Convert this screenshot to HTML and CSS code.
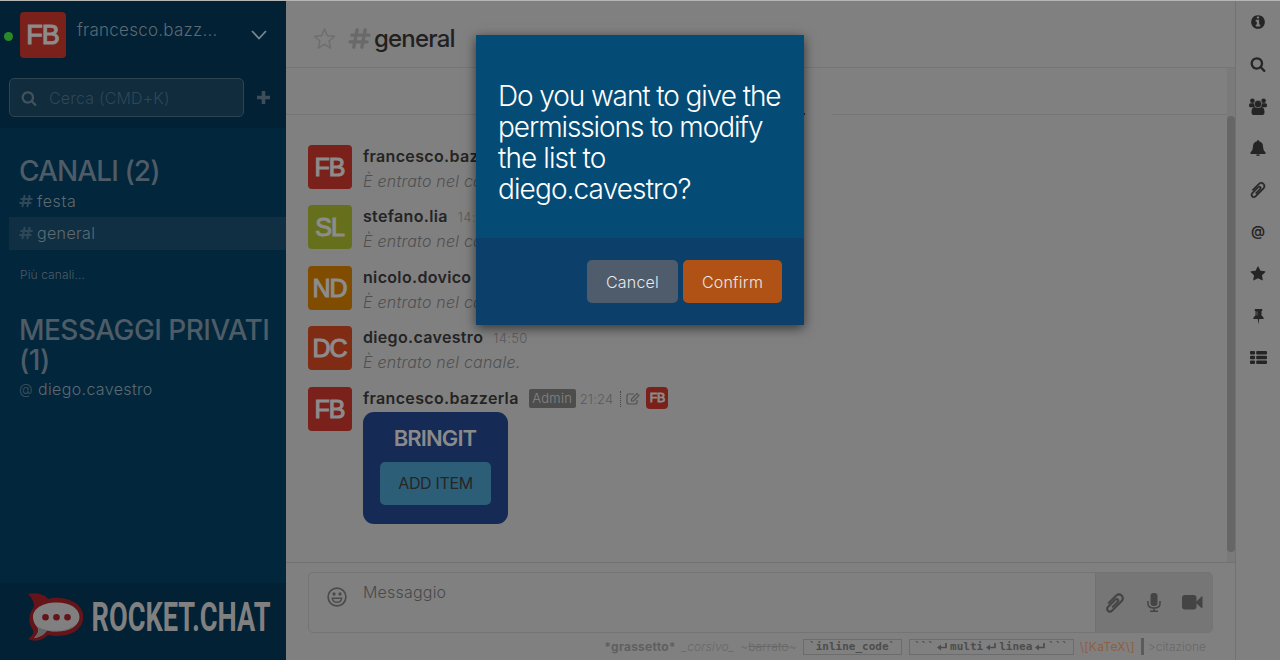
FILE: index.html
```html
<!DOCTYPE html>
<html lang="it">
<head>
<meta charset="utf-8">
<title>general</title>
<link rel="stylesheet" href="styles.css">
</head>
<body>
<svg class="defs" width="0" height="0" aria-hidden="true">
  <symbol id="search" viewBox="0 0 1792 1792"><path d="M1216 832q0-185-131.500-316.500t-316.500-131.500-316.500 131.500-131.500 316.500 131.500 316.500 316.500 131.500 316.500-131.500 131.500-316.500zm512 832q0 52-38 90t-90 38q-54 0-90-38l-343-342q-179 124-399 124-143 0-273.500-55.500t-225-150-150-225-55.500-273.500 55.500-273.500 150-225 225-150 273.500-55.500 273.500 55.500 225 150 150 225 55.500 273.500q0 220-124 399l343 343q37 37 37 90z"/></symbol>
  <symbol id="clip" viewBox="0 0 1792 1792"><path transform="translate(1792 0) scale(-1 1)" stroke="currentColor" stroke-width="50" d="M1596 1385q0 117-79 196t-196 79q-135 0-235-100l-777-776q-113-115-113-271 0-159 110-270t269-111q158 0 273 113l605 606q10 10 10 22 0 16-30.500 46.500t-46.500 30.500q-13 0-23-10l-606-607q-79-77-181-77-106 0-179 75t-73 181q0 105 76 181l776 777q63 63 145 63 64 0 106-42t42-106q0-82-63-145l-581-581q-26-24-60-24-29 0-48 19t-19 48q0 32 25 59l410 410q10 10 10 22 0 16-31 47t-47 31q-12 0-22-10l-410-410q-63-61-63-149 0-82 57-139t139-57q88 0 149 63l581 581q100 98 100 235z"/></symbol>
  <symbol id="hash" viewBox="0 0 24 22"><path d="M9.500 2 6 20M18 2l-3.500 18M4 7.500h18M2 14.500h18" fill="none" stroke="currentColor" stroke-width="3.500" stroke-linecap="round"/></symbol>
  <symbol id="ret" viewBox="0 0 10 8"><path d="M9 0v4.500H2" fill="none" stroke="currentColor" stroke-width="1.700"/><path d="M0 4.500L4 1.500v6z" fill="currentColor"/></symbol>
</svg>
<div class="topline"></div>
<div class="app">
  <aside class="side">
    <header class="side-head">
      <div class="me">
        <i class="dot"></i>
        <div class="avatar big red">FB</div>
        <span class="me-name">francesco.bazz...</span>
        <svg class="chev" width="16" height="10" viewBox="0 0 16 10"><path d="M1 1l7 7.500L15 1" fill="none" stroke="currentColor" stroke-width="1.800"/></svg>
      </div>
      <div class="find">
        <div class="find-box"><svg class="ic" width="16" height="16"><use href="#search"/></svg><span>Cerca (CMD+K)</span></div>
        <svg class="plus" width="13" height="13" viewBox="0 0 13 13"><path d="M6.500 0v13M0 6.500h13" stroke="currentColor" stroke-width="3.600"/></svg>
      </div>
    </header>
    <nav class="rooms">
      <h3 class="ch">CANALI (2)</h3>
      <div class="room"><svg class="hash" width="14" height="14"><use href="#hash"/></svg><span class="r1">festa</span></div>
      <div class="room active"><svg class="hash" width="14" height="14"><use href="#hash"/></svg><span>general</span></div>
      <div class="more">Più canali...</div>
      <h3 class="pm">MESSAGGI PRIVATI (1)</h3>
      <div class="room dm"><b class="at">@</b><span>diego.cavestro</span></div>
    </nav>
    <footer class="brand">
      <svg class="logo" width="250" height="50" viewBox="0 0 250 50">
        <path d="M0 1C10-1 17 2 20 6 31 3 43 6 50 12 57 19 57 30 50 36 43 43 31 44 20 42 14 48 7 49 0 46 4 43 6 40 5 37 0 31 0 21 6 14 6 8 3 4 0 1Z" fill="#651419"/>
        <path d="M28.500 9.500C42 9.500 51.500 15.500 51.500 24S42 38.500 29 38.500C25 38.500 22 38.500 19 37.500 16 42 11 44.500 6 45 9 42 11.500 37.500 9.500 34.500 6.500 31 5 28 5 24 5 15.500 15 9.500 28.500 9.500Z" fill="#808080"/>
        <path d="M10 34C20 39.500 38 39.500 48 31.500 43 37 32 39.500 19 37.500 15 42 11 44.500 6 45Q12 41 10 34Z" fill="#666"/>
        <g fill="#651419"><circle cx="17.500" cy="24.300" r="3.300"/><circle cx="28.500" cy="24.300" r="3.300"/><circle cx="39.500" cy="24.300" r="3.300"/></g>
        <text class="brand-text" x="63.500" y="37.500" textLength="179" lengthAdjust="spacingAndGlyphs">ROCKET.CHAT</text>
      </svg>
    </footer>
  </aside>
  <main class="main">
    <header class="room-head">
      <svg class="star-o" width="23" height="23" viewBox="0 0 24 24"><path d="M12 2l3 7 7.500.7-5.700 5 1.700 7.300L12 18l-6.500 4 1.700-7.300-5.700-5L9 9z" fill="none" stroke="currentColor" stroke-width="1.600" stroke-linejoin="round"/></svg>
      <svg class="hash-l" width="23" height="21"><use href="#hash"/></svg>
      <h2>general</h2>
    </header>
    <section class="stream">
      <div class="list">
        <div class="day"><i class="l"></i><i class="date-edge">.</i><i class="r"></i></div>
        <article class="msg"><div class="avatar red">FB</div><div class="body"><p class="who"><b>francesco.bazzerla</b></p><p class="sys">È entrato nel canale.</p></div></article>
        <article class="msg tall"><div class="avatar lime">SL</div><div class="body"><p class="who"><b>stefano.lia</b><time>14:50</time></p><p class="sys">È entrato nel canale.</p></div></article>
        <article class="msg"><div class="avatar amber">ND</div><div class="body"><p class="who"><b>nicolo.dovico</b></p><p class="sys">È entrato nel canale.</p></div></article>
        <article class="msg tall"><div class="avatar orange">DC</div><div class="body"><p class="who"><b>diego.cavestro</b><time>14:50</time></p><p class="sys">È entrato nel canale.</p></div></article>
        <article class="msg last"><div class="avatar red">FB</div><div class="body">
          <p class="who"><b>francesco.bazzerla</b><span class="tag">Admin</span><time class="t2">21:24</time><i class="sep"></i>
            <svg class="edit line" width="14" height="13" viewBox="0 0 14 13"><path d="M8 2H3Q1 2 1 4v6q0 2 2 2h6q2 0 2-2V8" stroke-width="1.200"/><path d="M5.500 9V7L11 1.500l2 2L7.500 9z" stroke-width="1.100"/></svg>
            <span class="avatar mini red">FB</span></p>
          <div class="bring"><h4>BRINGIT</h4><div class="add">ADD ITEM</div></div>
        </div></article>
      </div>
      <div class="track"><div class="thumb"></div></div>
    </section>
    <footer class="composer">
      <div class="input">
        <svg class="smile line" width="20" height="20" viewBox="0 0 20 20" stroke-width="1.700"><circle cx="10" cy="10" r="8.900"/><path d="M5.300 11.300h9.400q-.8 4-4.700 4t-4.700-4z" stroke-width="1.400"/><circle cx="7" cy="7" r=".8"/><circle cx="13" cy="7" r=".8"/></svg>
        <span class="ph">Messaggio</span>
        <div class="acts">
          <svg width="22" height="22"><use href="#clip"/></svg>
          <svg width="14" height="20" viewBox="0 0 14 20"><rect x="3.500" y="0" width="7" height="13" rx="3" fill="currentColor"/><path d="M1 8v2.500q0 4.500 6 4.500t6-4.500V8M7 15v3M3 18.200h8" fill="none" stroke="currentColor" stroke-width="1.500"/></svg>
          <svg width="21" height="15" viewBox="0 0 21 15"><rect x="0" y="0" width="14.500" height="14.500" rx="3"/><path d="M14 7l5.500-5.500q1-.5 1 .5v10.500q0 1-1 .5L14 8z"/></svg>
        </div>
      </div>
      <div class="hints">
        <b class="h1">*grassetto*</b><em class="h2">_corsivo_</em><span class="h3">~<s>barrato</s>~</span><code class="h4">`inline_code`</code><code class="h5"><span>```</span><svg width="10" height="8"><use href="#ret"/></svg><span>multi</span><svg width="10" height="8"><use href="#ret"/></svg><span>linea</span><svg width="10" height="8"><use href="#ret"/></svg><span>```</span></code><span class="h6">\[KaTeX\]</span><span class="h7">&gt;citazione</span>
      </div>
    </footer>
  </main>
  <aside class="tabs">
    <svg width="16" height="16" viewBox="0 0 1792 1792"><path d="M1152 1376v-160q0-14-9-23t-23-9h-96v-512q0-14-9-23t-23-9h-320q-14 0-23 9t-9 23v160q0 14 9 23t23 9h96v320h-96q-14 0-23 9t-9 23v160q0 14 9 23t23 9h448q14 0 23-9t9-23zm-128-896v-160q0-14-9-23t-23-9h-192q-14 0-23 9t-9 23v160q0 14 9 23t23 9h192q14 0 23-9t9-23zm640 416q0 209-103 385.500t-279.500 279.500-385.500 103-385.500-103-279.500-279.500-103-385.500 103-385.500 279.500-279.500 385.500-103 385.500 103 279.500 279.500 103 385.500z"/></svg>
    <svg width="16" height="16"><use href="#search"/></svg>
    <svg width="18" height="17" viewBox="0 0 18 17"><circle cx="3.400" cy="2.700" r="2.300"/><circle cx="14.600" cy="2.700" r="2.300"/><rect x="0" y="5.200" width="6" height="4" rx="1.500"/><rect x="12" y="5.200" width="6" height="4" rx="1.500"/><circle class="cut" cx="9" cy="6" r="3.700"/><path d="M5.500 9q3.500 2 7 0 3 .5 3 5 0 3-2 3h-9q-2 0-2-3 0-4.500 3-5z"/></svg>
    <svg width="16" height="16" viewBox="0 0 16 16"><path d="M8 0q1 0 1 1.200 4 .8 4 5.300 0 4 2.500 6v1.500H.5v-1.500Q3 10.500 3 6.500 3 2 7 1.200 7 0 8 0zM6 14.500h4Q9.800 16 8 16t-2-1.500z"/></svg>
    <svg width="18" height="18"><use href="#clip"/></svg>
    <b class="tab-at">@</b>
    <svg width="16" height="16" viewBox="0 0 1792 1792"><path d="M1728 647q0 22-26 48l-363 354 86 500q1 7 1 20 0 21-10.500 35.500t-30.500 14.500q-19 0-40-12l-449-236-449 236q-22 12-40 12-21 0-31.500-14.500t-10.500-35.500q0-6 2-20l86-500-364-354q-25-27-25-48 0-37 56-46l502-73 225-455q19-41 49-41t49 41l225 455 502 73q56 9 56 46z"/></svg>
    <svg class="pin" width="11" height="16" viewBox="0 0 11 16"><path d="M1.800 0h7.400v2H8.500v4.500q2.300 1 2.300 3.500H6.200L5.500 15.500 4.800 10H.2Q.2 7.500 2.500 6.500V2h-.7z"/><path d="M4 2.500v4" stroke="#666" stroke-width=".9"/></svg>
    <svg class="rows" width="17" height="13" viewBox="0 0 17 13"><path d="M0 1q0-1 1-1h3q1 0 1 1v1.500q0 1-1 1H1q-1 0-1-1zM6.200 1q0-1 1-1H16q1 0 1 1v1.500q0 1-1 1H7.200q-1 0-1-1zM0 5.700q0-1 1-1h3q1 0 1 1v1.500q0 1-1 1H1q-1 0-1-1zM6.200 5.700q0-1 1-1H16q1 0 1 1v1.500q0 1-1 1H7.200q-1 0-1-1zM0 10.500q0-1 1-1h3q1 0 1 1V12q0 1-1 1H1q-1 0-1-1zM6.200 10.500q0-1 1-1H16q1 0 1 1V12q0 1-1 1H7.200q-1 0-1-1z"/></svg>
  </aside>
</div>
<div class="dialog">
  <div class="ask"><span class="wide">Do you want to give the</span><br><span class="wide">permissions to modify</span><br><span>the list to</span><br><span>diego.cavestro?</span></div>
  <div class="btns"><button class="cancel">Cancel</button><button class="ok">Confirm</button></div>
</div>
</body>
</html>
```
FILE: styles.css
```css
* { box-sizing: border-box; margin: 0; padding: 0; }
body { width: 1280px; height: 660px; overflow: hidden; background: #808080; font: 300 16px/20px Inter, "Liberation Sans", sans-serif; position: relative; }
i { font-style: normal; }
svg { display: block; fill: currentColor; flex: none; }
.line { fill: none; stroke: currentColor; }
.defs { position: absolute; }
.topline { height: 1px; background: #b5b5b5; }
.app { display: flex; height: 659px; }

.side { width: 286px; display: flex; flex-direction: column; background: #02263b; color: #5c6a73; white-space: nowrap; }
.side-head { height: 127px; background: #022135; }
.me { display: flex; height: 77px; padding: 11px 0 0 4px; }
.dot { width: 9px; height: 9px; border-radius: 50%; background: #2a8a2a; margin: 20px 7px 0 0; }
.avatar { width: 44px; height: 44px; border-radius: 4px; flex: none; color: #8c8c8c; font: 400 25px/44px "Liberation Sans", sans-serif; text-align: center; letter-spacing: -1px; padding-right: 1px; -webkit-text-stroke: 1.1px currentColor; }
.avatar.big { width: 46px; height: 46px; font-size: 27px; line-height: 47px; }
.avatar.mini { width: 22px; height: 22px; font-size: 12.500px; line-height: 22px; letter-spacing: -.3px; padding: 0; -webkit-text-stroke-width: .8px; }
.red { background: #7a211b; }
.lime { background: #66701c; }
.amber { background: #804c00; }
.orange { background: #802b14; }
.me-name { width: 172px; margin: 8px 0 0 11px; font-size: 17px; letter-spacing: .25px; }
.chev { margin: 18px 0 0 2px; color: #7a868e; }
.find { display: flex; align-items: center; padding-left: 9px; }
.find-box { width: 235px; height: 39px; border: 1px solid #2c4453; border-radius: 5px; background: #102c3d; display: flex; align-items: center; padding-left: 11px; color: #2f4756; font-size: 16px; letter-spacing: .18px; }
.find-box span { margin-left: 12px; padding-top: 1px; }
.find-box .ic { color: #42525d; }
.plus { margin-left: 13px; color: #3c4e5a; }
.rooms { flex: 1; padding-top: 28px; }
.rooms h3 { font-weight: 500; font-size: 28px; line-height: 30px; padding-left: 19px; letter-spacing: -.55px; color: #4d5c66; }
.rooms h3.ch { letter-spacing: -.9px; }
.rooms h3.pm { margin-top: 30px; white-space: normal; padding-right: 8px; }
.room { height: 31px; margin-left: 9px; padding: 0 0 1px 10px; display: flex; align-items: center; letter-spacing: .35px; }
.room span { margin-left: 4px; }
.room .r1 { letter-spacing: .6px; }
.room.active { height: 33px; background: #112f42; }
.hash { color: #2f4858; }
.at { width: 15px; font-weight: 400; font-size: 14px; letter-spacing: 0; color: #334b5a; }
.more { margin-top: 15px; padding-left: 20px; font-size: 12px; color: #4c5c67; letter-spacing: .1px; }
.room.dm { height: 29px; }
.brand { height: 77px; background: #022135; padding: 10px 0 0 28px; }
.logo { overflow: visible; }
.brand-text { font: 700 40px/1 Roboto, sans-serif; fill: #808080; }

.main { width: 949px; display: flex; flex-direction: column; color: #555; }
.room-head { height: 67px; border-bottom: 1px solid #757575; display: flex; align-items: center; padding: 8px 0 0 27px; }
.star-o { color: #6f6f6f; }
.hash-l { color: #696969; margin-left: 12px; }
h2 { font-size: 24px; font-weight: 500; line-height: 30px; color: #212121; letter-spacing: -.8px; margin-left: 3px; padding-top: 1px; }
.stream { flex: 1; display: flex; }
.list { width: 941px; padding-top: 35px; }
.day { display: flex; height: 42px; align-items: flex-start; }
.day .l { width: 190px; border-top: 1px solid #757575; margin-top: 11px; }
.day .date-edge { width: 356px; text-align: right; padding-right: 26px; font-weight: 600; font-size: 14px; line-height: 14px; color: #222; }
.day .r { flex: 1; border-top: 1px solid #757575; margin-top: 11px; }
.msg { display: flex; height: 60px; padding-left: 22px; white-space: nowrap; }
.msg.tall { height: 61px; }
.body { margin-left: 11px; }
.who { display: flex; height: 22px; align-items: center; }
.who b { font-size: 16px; font-weight: 600; color: #242424; letter-spacing: .33px; }
time { font-size: 13px; color: #5a5a5a; margin-left: 10px; letter-spacing: .35px; padding-top: 2px; }
.t2 { margin-left: 4px; letter-spacing: .2px; }
.sys { font-size: 16px; line-height: 22px; margin-top: 3px; font-style: italic; color: #505050; letter-spacing: .22px; }
.tag { width: 47px; height: 19px; border-radius: 2px; background: #4d4d4d; color: #858585; font-size: 13px; line-height: 19px; text-align: center; margin: 1px 0 0 10px; letter-spacing: .3px; }
.sep { height: 16px; border-left: 1px dotted #444; margin: 1px 5px 0 7px; }
.edit { color: #525252; margin-right: 6px; }
.bring { width: 145px; height: 112px; border-radius: 11px; margin-top: 3px; background: #152a54; padding: 12px 17px; text-align: center; }
h4 { font-size: 22px; line-height: 29px; font-weight: 600; color: #8a8a8a; letter-spacing: -.9px; padding-right: 1px; }
.add { height: 43px; line-height: 43px; margin-top: 9px; border-radius: 5px; background: #2d5e78; color: #262626; font-size: 16px; font-weight: 400; letter-spacing: -.35px; }
.track { width: 8px; background: #7a7a7a; padding-top: 48px; }
.thumb { height: 436px; border-radius: 4px; background: #666; }
.composer { height: 98px; border-top: 1px solid #717171; padding: 9px 22px 0; }
.input { height: 61px; border: 1px solid #747474; border-radius: 5px; display: flex; overflow: hidden; }
.smile { color: #4b4b4b; margin: 14px 0 0 18px; }
.ph { flex: 1; margin: 9px 0 0 16px; font-size: 16px; letter-spacing: .2px; color: #494949; }
.acts { width: 117px; background: #767676; border-left: 1px solid #717171; display: flex; align-items: center; justify-content: space-between; padding: 0 9px 0 8px; color: #444; }
.hints { height: 27px; display: flex; align-items: center; justify-content: flex-end; font-size: 12px; color: #686868; padding: 0 7px 0 0; white-space: nowrap; }
.h1 { font-weight: 700; color: #5f5f5f; letter-spacing: .25px; }
.h2 { margin-left: 6px; letter-spacing: .1px; }
.h3 { margin-left: 6px; letter-spacing: .1px; }
code { height: 16px; border: 1px solid #6c6c6c; font: 700 11px/14px "DejaVu Sans Mono", monospace; color: #4d4d4d; margin-left: 7px; }
.h4 { width: 99px; text-align: center; margin-left: 6px; }
.h5 { width: 165px; display: flex; align-items: center; justify-content: center; gap: 3px; }
.h6 { margin-left: 6px; color: #8d5f42; letter-spacing: .25px; font-weight: 400; }
.h7 { margin-left: 6px; border-left: 3px solid #5b5b5b; padding-left: 4px; line-height: 17px; letter-spacing: 0; }

.tabs { width: 45px; border-left: 1px solid #727272; color: #252525; display: grid; grid-auto-rows: 42px; justify-items: center; align-items: center; }
.cut { stroke: #808080; stroke-width: .6; }
.tab-at { font-size: 14px; font-weight: 600; padding-bottom: 2px; }
.pin { margin-top: 2px; }
.rows { margin-bottom: 2px; }

.dialog { position: absolute; left: 476px; top: 35px; width: 328px; height: 290px; background: #044c75; box-shadow: 0 3px 11px rgba(0,0,0,.6); }
.ask { height: 203px; padding: 46px 22px 0; color: #fff; font-size: 28px; line-height: 31px; letter-spacing: -.9px; white-space: nowrap; }
.wide { letter-spacing: -1.1px; }
.btns { height: 87px; background: #0c406a; padding: 22px 22px 0; display: flex; justify-content: flex-end; gap: 5px; }
button { height: 43px; border: 0; border-radius: 5px; font: 300 16px Inter, sans-serif; letter-spacing: .22px; color: #e6e8ea; }
.cancel { width: 91px; background: #4e5c6b; }
.ok { width: 99px; background: #b05215; }
```
